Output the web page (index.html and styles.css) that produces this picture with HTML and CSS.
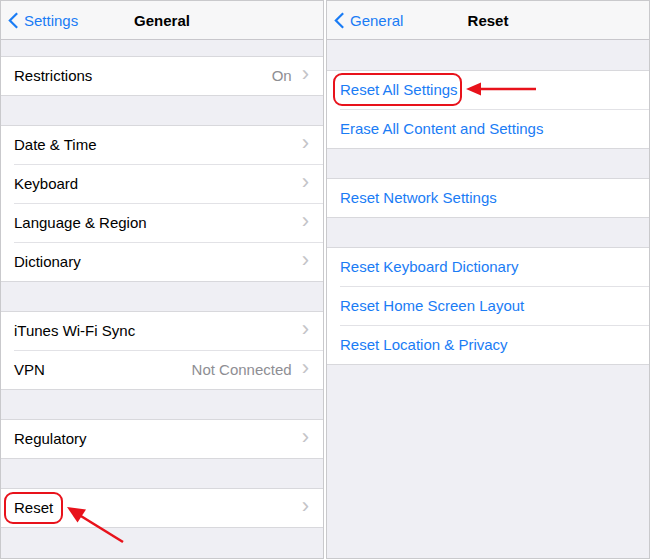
FILE: index.html
```html
<!DOCTYPE html>
<html>
  <head>
    <title>Reset</title>
    <link rel="stylesheet" href="styles.css">
  </head>
  <body>
    <div class="screens">
      <!-- General -->
      <div class="screen">
        <div class="nav">
          <a class="back">
            <svg viewBox="0 0 12 20"><path d="M10 2L2 10l8 8" /></svg>
            Settings
          </a>
          <h1>General</h1>
        </div>
        <div class="content first-small">
          <div class="group">
            <div class="row"><span class="label">Restrictions</span><span class="value">On</span><span class="chev">&#x203A;</span></div>
          </div>
          <div class="group">
            <div class="row"><span class="label">Date &amp; Time</span><span class="chev">&#x203A;</span></div>
            <div class="row"><span class="label">Keyboard</span><span class="chev">&#x203A;</span></div>
            <div class="row"><span class="label">Language &amp; Region</span><span class="chev">&#x203A;</span></div>
            <div class="row"><span class="label">Dictionary</span><span class="chev">&#x203A;</span></div>
          </div>
          <div class="group">
            <div class="row"><span class="label">iTunes Wi-Fi Sync</span><span class="chev">&#x203A;</span></div>
            <div class="row"><span class="label">VPN</span><span class="value">Not Connected</span><span class="chev">&#x203A;</span></div>
          </div>
          <div class="group">
            <div class="row"><span class="label">Regulatory</span><span class="chev">&#x203A;</span></div>
          </div>
          <div class="group">
            <div class="row"><span class="label">Reset</span><span class="chev">&#x203A;</span></div>
          </div>
        </div>
        <div class="mark mark-reset"></div>
        <svg class="arrow arrow-left" viewBox="0 0 70 45">
          <line x1="59" y1="39" x2="12" y2="10" />
          <path d="M3 4L22 6.5 13.5 19.5z" />
        </svg>
      </div>

      <!-- Reset -->
      <div class="screen">
        <div class="nav">
          <a class="back">
            <svg viewBox="0 0 12 20"><path d="M10 2L2 10l8 8" /></svg>
            General
          </a>
          <h1>Reset</h1>
        </div>
        <div class="content">
          <div class="group">
            <div class="row link">Reset All Settings</div>
            <div class="row link">Erase All Content and Settings</div>
          </div>
          <div class="group">
            <div class="row link">Reset Network Settings</div>
          </div>
          <div class="group">
            <div class="row link">Reset Keyboard Dictionary</div>
            <div class="row link">Reset Home Screen Layout</div>
            <div class="row link">Reset Location &amp; Privacy</div>
          </div>
        </div>
        <div class="mark mark-all"></div>
        <svg class="arrow arrow-right" viewBox="0 0 74 16">
          <line x1="14" y1="8" x2="71" y2="8" />
          <path d="M1 8L16 1.5v13z" />
        </svg>
      </div>
    </div>
  </body>
</html>
```

FILE: styles.css
```css
* {
  margin: 0;
  padding: 0;
  box-sizing: border-box;
}

body {
  font-family: "Liberation Sans", Arial, sans-serif;
  background: #ffffff;
  color: #000;
}

.screens {
  display: flex;
  gap: 2px;
  width: 650px;
  height: 559px;
}

.screen {
  position: relative;
  width: 324px;
  height: 559px;
  border: 1px solid #c9c9cc;
  background: #efeff4;
  overflow: hidden;
}

.nav {
  height: 39px;
  background: #f7f7f8;
  border-bottom: 1px solid #c8c7cc;
  display: flex;
  align-items: center;
  justify-content: center;
  position: relative;
}

.nav h1 {
  font-size: 15px;
  font-weight: 700;
}

.back {
  position: absolute;
  left: 7px;
  top: 10px;
  display: flex;
  align-items: center;
  gap: 5px;
  color: #1a7cf5;
  font-size: 15px;
}

.back svg {
  width: 11px;
  height: 19px;
  fill: none;
  stroke: #1a7cf5;
  stroke-width: 2.4;
}

.content {
  display: flex;
  flex-direction: column;
  gap: 29px;
  padding-top: 30px;
}

.content.first-small {
  padding-top: 16px;
}

.group {
  background: #fff;
  border-top: 1px solid #d8d8dc;
  border-bottom: 1px solid #d8d8dc;
}

.row {
  height: 38px;
  display: flex;
  align-items: center;
  padding: 0 13px 2px;
  font-size: 15px;
  position: relative;
}

.row + .row {
  margin-top: 1px;
}

.row + .row::before {
  content: "";
  position: absolute;
  top: -1px;
  left: 13px;
  right: 0;
  border-top: 1px solid #e2e2e6;
}

.label {
  flex: 1;
}

.value {
  color: #8e8e93;
  margin-right: 10px;
}

.chev {
  color: #c4c4c8;
  font-size: 22px;
  line-height: 1;
  margin-top: -3px;
  margin-right: 1px;
}

.link {
  color: #1a7cf5;
}

.mark {
  position: absolute;
  border: 2px solid #e8121b;
  border-radius: 9px;
}

.mark-reset {
  left: 3px;
  top: 491px;
  width: 59px;
  height: 32px;
}

.mark-all {
  left: 6px;
  top: 72px;
  width: 129px;
  height: 33px;
}

.arrow {
  position: absolute;
}

.arrow line {
  stroke: #e8121b;
  stroke-width: 2.6;
}

.arrow path {
  fill: #e8121b;
}

.arrow-left {
  left: 63px;
  top: 502px;
  width: 70px;
  height: 45px;
}

.arrow-right {
  left: 138px;
  top: 80px;
  width: 74px;
  height: 16px;
}
```
